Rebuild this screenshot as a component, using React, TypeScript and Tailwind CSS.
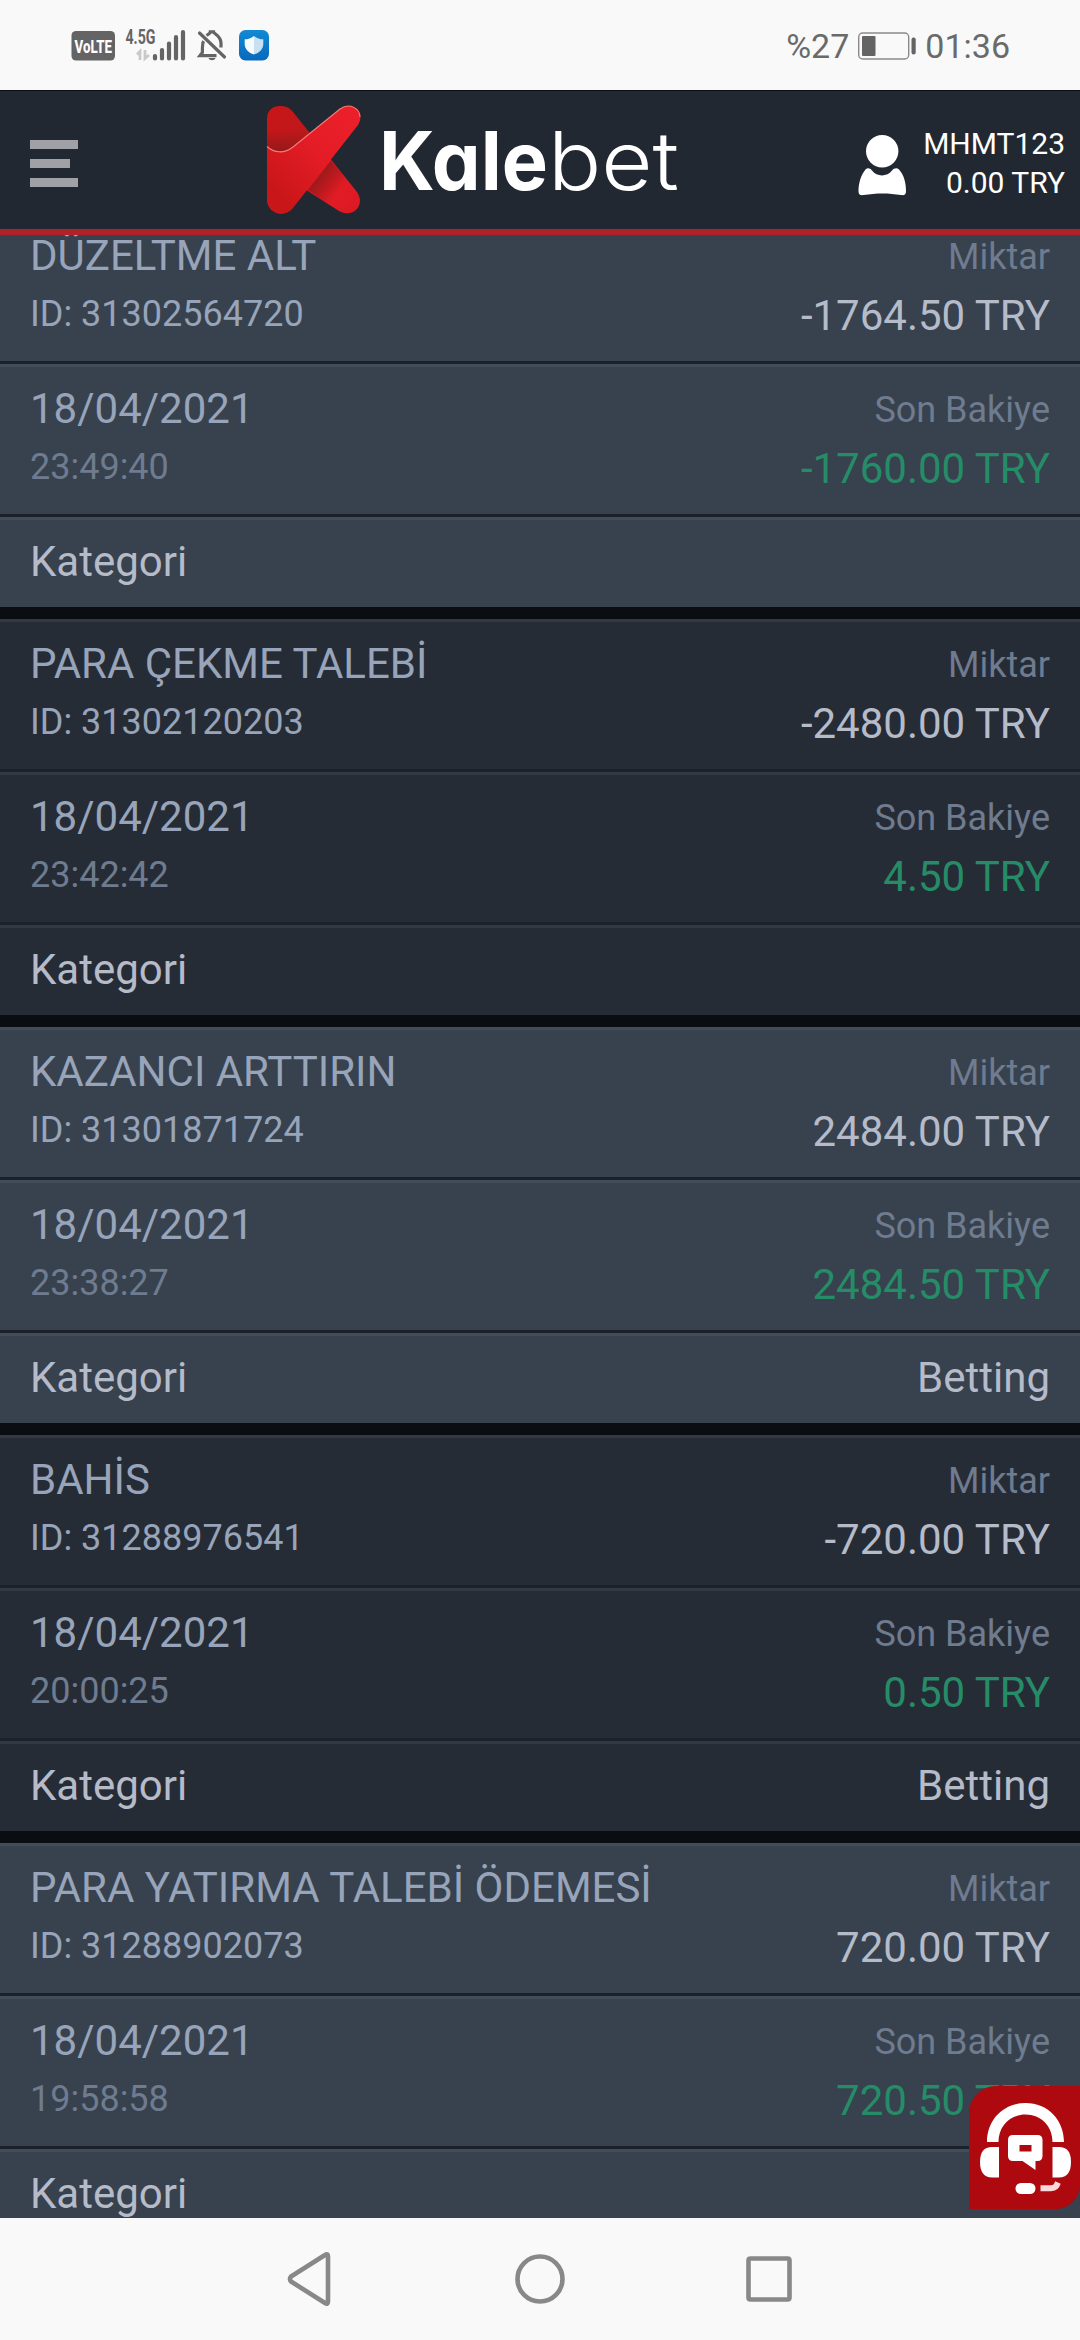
type Transaction = {
  title: string;
  id: string;
  amount: string;
  time: string;
  balance: string;
  category?: string;
};

const transactions: Transaction[] = [
  { title: "DÜZELTME ALT", id: "31302564720", amount: "-1764.50 TRY", time: "23:49:40", balance: "-1760.00 TRY" },
  { title: "PARA ÇEKME TALEBİ", id: "31302120203", amount: "-2480.00 TRY", time: "23:42:42", balance: "4.50 TRY" },
  { title: "KAZANCI ARTTIRIN", id: "31301871724", amount: "2484.00 TRY", time: "23:38:27", balance: "2484.50 TRY", category: "Betting" },
  { title: "BAHİS", id: "31288976541", amount: "-720.00 TRY", time: "20:00:25", balance: "0.50 TRY", category: "Betting" },
  { title: "PARA YATIRMA TALEBİ ÖDEMESİ", id: "31288902073", amount: "720.00 TRY", time: "19:58:58", balance: "720.50 TRY" },
];

function StatusBar() {
  return (
    <div className="flex h-[90px] shrink-0 items-start bg-[#f9f9f9] pr-[70px] pl-[71px] text-[#6a6a6a]">
      <svg className="mt-[18px] h-[56px] w-[200px]" viewBox="71 18 200 56">
        <rect x="71.5" y="31" width="43.5" height="29.5" rx="4.5" fill="#646464" />
        <text x="74.500" y="52.500" fontFamily="Roboto" fontWeight="800" fontSize="19" fill="#fff" textLength="37.500" lengthAdjust="spacingAndGlyphs">VoLTE</text>
        <text x="125.500" y="43.500" fontFamily="Roboto" fontWeight="700" fontSize="20" fill="#646464" textLength="30" lengthAdjust="spacingAndGlyphs">4.5G</text>
        <path d="M137 54.500L140 51.500V60M145 50V58.500L149 55" stroke="#c9c9c9" strokeWidth="2.800" fill="none" />
        <path d="M155 56V58.500M162 50V58.500M169 43.500V58.500M176 37V58.500M183 32V58.500" stroke="#646464" strokeWidth="4.200" strokeLinecap="round" />
        <g fill="none" stroke="#646464" strokeWidth="3.200">
          <path d="M203.500 41C202.500 43 202.400 45 202.400 48V52.500L200 55.600H216.500M206.500 35.500C208.500 34 210.300 34 210.300 31.800H213.500C213.500 34 221 35 221 43.500V47.500" />
          <path d="M199.500 33L224.500 57" strokeLinecap="round" />
        </g>
        <path d="M208.500 58H215.500C214.600 61 209.400 61 208.500 58Z" fill="#646464" />
        <defs>
          <linearGradient id="appBlue" x1="0" y1="0" x2="0" y2="1">
            <stop stopColor="#128ad2" />
            <stop offset="1" stopColor="#0869bd" />
          </linearGradient>
        </defs>
        <rect x="239" y="30" width="30" height="30.500" rx="6.500" fill="url(#appBlue)" />
        <path d="M254 36C257 38.500 260 39.300 263.300 39.300V44C263.300 49 259.500 53 254 54.500Z" fill="#c9e0f2" />
        <path d="M254 36C251 38.500 248 39.300 244.700 39.300V44C244.700 49 248.500 53 254 54.500Z" fill="#f4fafe" />
      </svg>
      <div className="ml-auto flex items-center pt-[25px] text-[34px] leading-[42px]">
        <span>%27</span>
        <svg className="mr-[9px] ml-[9px] h-[28px] w-[58px]" viewBox="0 0 58 28">
          <rect x="0.700" y="1" width="50" height="26" rx="4" fill="none" stroke="#8a8a8a" strokeWidth="1.400" />
          <rect x="4" y="4" width="13.500" height="20" rx="1" fill="#646464" />
          <rect x="53.500" y="5.500" width="4.200" height="17" rx="2" fill="#646464" />
        </svg>
        <span>01:36</span>
      </div>
    </div>
  );
}

function Logo() {
  return (
    <svg className="ml-[182px] h-[130px] w-[430px]" viewBox="260 95 430 130">
      <defs>
        <linearGradient id="back" x1="0" y1="0" x2="1" y2="1">
          <stop offset="0" stopColor="#c91518" />
          <stop offset="0.350" stopColor="#be191b" />
          <stop offset="0.600" stopColor="#c81a1d" />
          <stop offset="0.800" stopColor="#e21b25" />
          <stop offset="1" stopColor="#d81a22" />
        </linearGradient>
        <linearGradient id="fold" gradientUnits="userSpaceOnUse" x1="285" y1="130" x2="285" y2="152">
          <stop stopColor="#8d191b" stopOpacity="0" />
          <stop offset="1" stopColor="#8d191b" stopOpacity="0.850" />
        </linearGradient>
        <linearGradient id="under" gradientUnits="userSpaceOnUse" x1="316" y1="174" x2="338" y2="190">
          <stop stopColor="#8d191b" stopOpacity="0.800" />
          <stop offset="1" stopColor="#8d191b" stopOpacity="0" />
        </linearGradient>
        <linearGradient id="front" x1="0" y1="1" x2="1" y2="0">
          <stop offset="0.150" stopColor="#c91619" />
          <stop offset="0.550" stopColor="#e41c26" />
          <stop offset="1" stopColor="#ec202a" />
        </linearGradient>
      </defs>
      <path d="M267 119C267 110 273 106 280 106C286 106 290 108 293 112L357 192C366 205 353 219 339 211L267 165Z" fill="url(#back)" />
      <path d="M267 119L304 127L309 133L290 152L267 150Z" fill="url(#fold)" />
      <path d="M331 161L357 192C366 205 353 219 339 211L308 190Z" fill="url(#under)" />
      <path d="M267 146.500C274 153 284 154 293 147L340 109C353 100 366 113 358 125L293 208C283 220 267 212 267 200Z" fill="url(#front)" />
      <path d="M267 146.500C274 153 284 154 293 147L340 109C350 102 360 109 360 117" fill="none" stroke="#f47d77" strokeWidth="1.100" />
      <text x="379" y="190" fontFamily="Inter" fontWeight="700" fontSize="81" fill="#fff" textLength="169" lengthAdjust="spacingAndGlyphs" style={{ fontFeatureSettings: '"cv11" 1' }}>Kale</text>
      <text x="548" y="190" fontFamily="Inter" fontWeight="300" fontSize="81" fill="#fff" textLength="131" lengthAdjust="spacingAndGlyphs">bet</text>
    </svg>
  );
}

function Header() {
  return (
    <header className="flex h-[145px] shrink-0 items-start border-t border-b-6 border-t-[#0a0e14] border-b-[#b0222a] bg-[#222831] pl-[30px]">
      <div className="flex w-[48px] flex-col gap-[10px] pt-[49px]">
        <span className="h-[9px] w-[48px] bg-[#9fa1a7]" />
        <span className="h-[9px] w-[40px] bg-[#9fa1a7]" />
        <span className="h-[9px] w-[48px] bg-[#9fa1a7]" />
      </div>
      <div className="pt-[4px]">
        <Logo />
      </div>
      <div className="mr-[15px] ml-auto flex pt-[33px]">
        <svg className="mt-[9px] mr-[16px] h-[64px] w-[50px]" viewBox="856 132 50 64" fill="#fff">
          <ellipse cx="881.200" cy="150.300" rx="16.200" ry="16.200" />
          <path d="M864.500 168.500C866.500 166.500 869 167 871 169.500C876 176 886 176 891 169.500C893 167 896 166.500 898 168.500C903 174 905 182 905 190C905 193.500 903.500 194.600 900 194.100C888 191.800 875 191.800 862.500 194.100C859 194.600 857.500 193.500 857.500 190C857.500 182 860 174 864.500 168.500Z" />
        </svg>
        <div className="text-right text-[30px] leading-[39px] text-white">
          <div>MHMT123</div>
          <div>0.00 TRY</div>
        </div>
      </div>
    </header>
  );
}

function TransactionCard({ item, light }: { item: Transaction; light: boolean }) {
  const tone = light ? "bg-[#37424e] border-t-[#434c59]" : "bg-[#262c36] border-t-[#323943]";
  return (
    <article className="mb-[12px] text-[42px] leading-[48px]">
      <div className={`flex h-[153px] justify-between border-t-3 border-b-3 border-b-[#1a212a] px-[30px] ${tone}`}>
        <div className="pt-[18px] text-[#98a4b9]">
          <div>{item.title}</div>
          <div className="mt-[13px] text-[36px] leading-[42px]">ID: {item.id}</div>
        </div>
        <div className="pt-[22px] text-right">
          <div className="text-[36px] leading-[42px] text-[#6f7b8e]">Miktar</div>
          <div className="mt-[14px] text-[#b5bbc8]">{item.amount}</div>
        </div>
      </div>
      <div className={`flex h-[153px] justify-between border-t-3 border-b-3 border-b-[#1a212a] px-[30px] ${tone}`}>
        <div className="pt-[18px] text-[#98a4b9]">
          <div>18/04/2021</div>
          <div className="mt-[13px] text-[36px] leading-[42px] text-[#6f7b8e]">{item.time}</div>
        </div>
        <div className="pt-[22px] text-right">
          <div className="text-[36px] leading-[42px] text-[#6f7b8e]">Son Bakiye</div>
          <div className="mt-[14px] text-[#268c67]">{item.balance}</div>
        </div>
      </div>
      <div className={`flex h-[90px] justify-between border-t-3 px-[30px] pt-[18px] text-[#b5bbc8] ${tone}`}>
        <span>Kategori</span>
        <span>{item.category}</span>
      </div>
    </article>
  );
}

function SupportButton() {
  return (
    <button className="absolute right-0 bottom-[9px] h-[123px] w-[111px] rounded-tl-[27px] rounded-br-[24px] bg-[#ad090f]">
      <svg className="h-[123px] w-[111px]" viewBox="0 0 111 123" fill="#fff">
        <path d="M18 56C18 34 34 17 56.500 17C79 17 95 34 95 56H83.500C83.500 40 72 28.500 56.500 28.500C41 28.500 29.500 40 29.500 56Z" />
        <path d="M30 61V91.500H23C15 91.500 11 86 11 76C11 66 15 61 23 61Z" />
        <path d="M83.500 61V91.500H90C98 91.500 102 86 102 76C102 66 98 61 90 61Z" />
        <path fillRule="evenodd" d="M44 49H68.500Q73.500 49 73.500 54V70Q73.500 75 68.500 75H66.500V84L53.500 75H44Q39 75 39 70V54Q39 49 44 49ZM50.500 59V65.500H62.500V59Z" />
        <rect x="46.500" y="97" width="20" height="11" rx="5.500" />
        <path d="M71.500 102.300H82C86.500 102.300 87.500 100 89 96.500" fill="none" stroke="#fbd9da" strokeWidth="6" />
      </svg>
    </button>
  );
}

function NavigationBar() {
  return (
    <nav className="flex h-[122px] shrink-0 items-center justify-between bg-[#f9f9f9] px-[282px]">
      {["M46 6.500V51.500Q46 55 43 53L9 31.500Q7 29 9 26.500L43 5Q46 3 46 6.500Z", "M29 6.500A22.500 22.500 0 1 1 29 51.500A22.500 22.500 0 1 1 29 6.500Z", "M10.500 8.500H47.500Q49.500 8.500 49.500 10.500V47.500Q49.500 49.500 47.500 49.500H10.500Q8.500 49.500 8.500 47.500V10.500Q8.500 8.500 10.500 8.500Z"].map((d) => (
        <svg key={d} className="h-[58px] w-[58px]" viewBox="0 0 58 58" fill="none" stroke="#888888" strokeWidth="4.600">
          <path d={d} />
        </svg>
      ))}
    </nav>
  );
}

export default function App() {
  return (
    <div className="flex h-[2340px] w-[1080px] flex-col overflow-hidden bg-[#0a0d12] font-['Roboto',sans-serif]">
      <StatusBar />
      <Header />
      <main className="relative min-h-0 flex-1 overflow-hidden">
        <div className="-mt-[24px]">
          {transactions.map((item, index) => (
            <TransactionCard key={item.id} item={item} light={index % 2 === 0} />
          ))}
        </div>
        <SupportButton />
      </main>
      <NavigationBar />
    </div>
  );
}
